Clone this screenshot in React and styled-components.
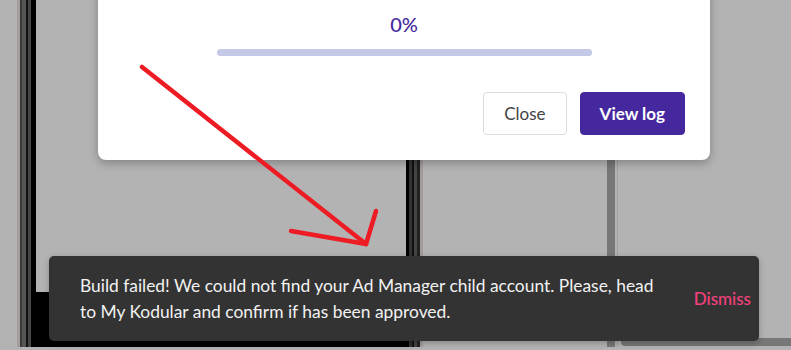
import React from "react";
import styled, { createGlobalStyle } from "styled-components";

const GlobalStyle = createGlobalStyle`
  html, body {
    margin: 0;
    padding: 0;
    background: #b3b3b3;
    overflow: hidden;
  }
  body {
    font-family: Lato, "Noto Sans", sans-serif;
  }
`;

const Stage = styled.div`
  position: relative;
  width: 791px;
  height: 350px;
  overflow: hidden;
  background: #b3b3b3;
`;

/* dimmed workspace behind the dialog */
const Workspace = styled.div`
  display: grid;
  grid-template-columns: 17px 19px 370px 17px 184px 8px 2px 1fr;
  grid-template-rows: 347px 3px;
  height: 100%;
`;

const Edge = styled.div`
  background: ${(p) =>
    p.$side === "left"
      ? "linear-gradient(to right, #a39c9b 0 3px, #3a3a3a 3px 5px, #565656 5px 9px, #111 9px 11px, #454545 11px 14px, #000 14px)"
      : "linear-gradient(to right, #000 0 3px, #333 3px 6px, #111 6px 8px, #444 8px 11px, #222 11px 14px, #a39c9b 14px)"};
`;

const Screen = styled.div`
  display: flex;
  flex-direction: column;
  justify-content: flex-end;
`;

const ScreenFooter = styled.div`
  height: 55px;
  background: #000;
`;

const Divider = styled.div`
  background: #777;
`;

const SidePanel = styled.div`
  display: flex;
  flex-direction: column;
  justify-content: flex-end;
  padding-left: 3px;
  border-left: 1px solid #a2a2a2;
`;

const SideFooter = styled.div`
  height: 8px;
  margin-bottom: 1px;
  background: #777;
  border-bottom-left-radius: 4px;
`;

/* progress dialog */
const Dialog = styled.div`
  position: absolute;
  left: 98px;
  bottom: 190px;
  width: 612px;
  box-sizing: border-box;
  padding: 60px 25px 25px;
  background: #fff;
  border-radius: 8px;
  box-shadow: 0 3px 10px rgba(0, 0, 0, 0.28);
  display: flex;
  flex-direction: column;
  align-items: center;
`;

const Percent = styled.div`
  font-size: 20px;
  line-height: 24px;
  font-weight: 500;
  color: #45289d;
`;

const Track = styled.div`
  margin-top: 13px;
  width: 375px;
  height: 7px;
  border-radius: 4px;
  background: #c5c9e8;
`;

const Actions = styled.div`
  align-self: stretch;
  display: flex;
  justify-content: flex-end;
  gap: 13px;
  margin-top: 36px;
`;

const Button = styled.button`
  height: 43px;
  padding: 0 ${(p) => (p.$primary ? "19px" : "20px")};
  border-radius: 4px;
  font-family: Lato, "Noto Sans", sans-serif;
  font-size: 17px;
  font-weight: ${(p) => (p.$primary ? 700 : 400)};
  border: 1px solid ${(p) => (p.$primary ? "#45289d" : "#dcdcdc")};
  background: ${(p) => (p.$primary ? "#45289d" : "#fff")};
  color: ${(p) => (p.$primary ? "#fff" : "#444")};
`;

/* snackbar */
const Toast = styled.div`
  position: absolute;
  left: 49px;
  top: 256px;
  width: 710px;
  height: 85px;
  box-sizing: border-box;
  padding: 0 8px 0 31px;
  background: #333;
  border-radius: 5px;
  box-shadow: 0 2px 6px rgba(0, 0, 0, 0.25);
  display: flex;
  align-items: center;
  justify-content: space-between;
`;

const Message = styled.div`
  width: 578px;
  font-size: 17.4px;
  line-height: 26px;
  color: #f2f2f2;
`;

const Dismiss = styled.span`
  font-size: 17px;
  font-weight: 500;
  color: #f5407d;
`;

const Annotation = styled.svg`
  position: absolute;
  left: 0;
  top: 0;
  pointer-events: none;
`;

export default function App() {
  return (
    <Stage>
      <GlobalStyle />
      <Workspace>
        <div />
        <Edge $side="left" />
        <Screen>
          <ScreenFooter />
        </Screen>
        <Edge $side="right" />
        <div />
        <Divider />
        <div />
        <SidePanel>
          <SideFooter />
        </SidePanel>
      </Workspace>

      <Dialog>
        <Percent>0%</Percent>
        <Track />
        <Actions>
          <Button>Close</Button>
          <Button $primary>View log</Button>
        </Actions>
      </Dialog>

      <Annotation width="791" height="350" viewBox="0 0 791 350">
        <g stroke="#ed1c24" strokeWidth="4.5" strokeLinecap="round" strokeLinejoin="round" fill="none">
          <line x1="142" y1="67" x2="366" y2="244" />
          <polyline points="376,211 366,244 291,231" />
        </g>
      </Annotation>

      <Toast>
        <Message>
          Build failed! We could not find your Ad Manager child account. Please, head to My Kodular and confirm if has been approved.
        </Message>
        <Dismiss>Dismiss</Dismiss>
      </Toast>
    </Stage>
  );
}
